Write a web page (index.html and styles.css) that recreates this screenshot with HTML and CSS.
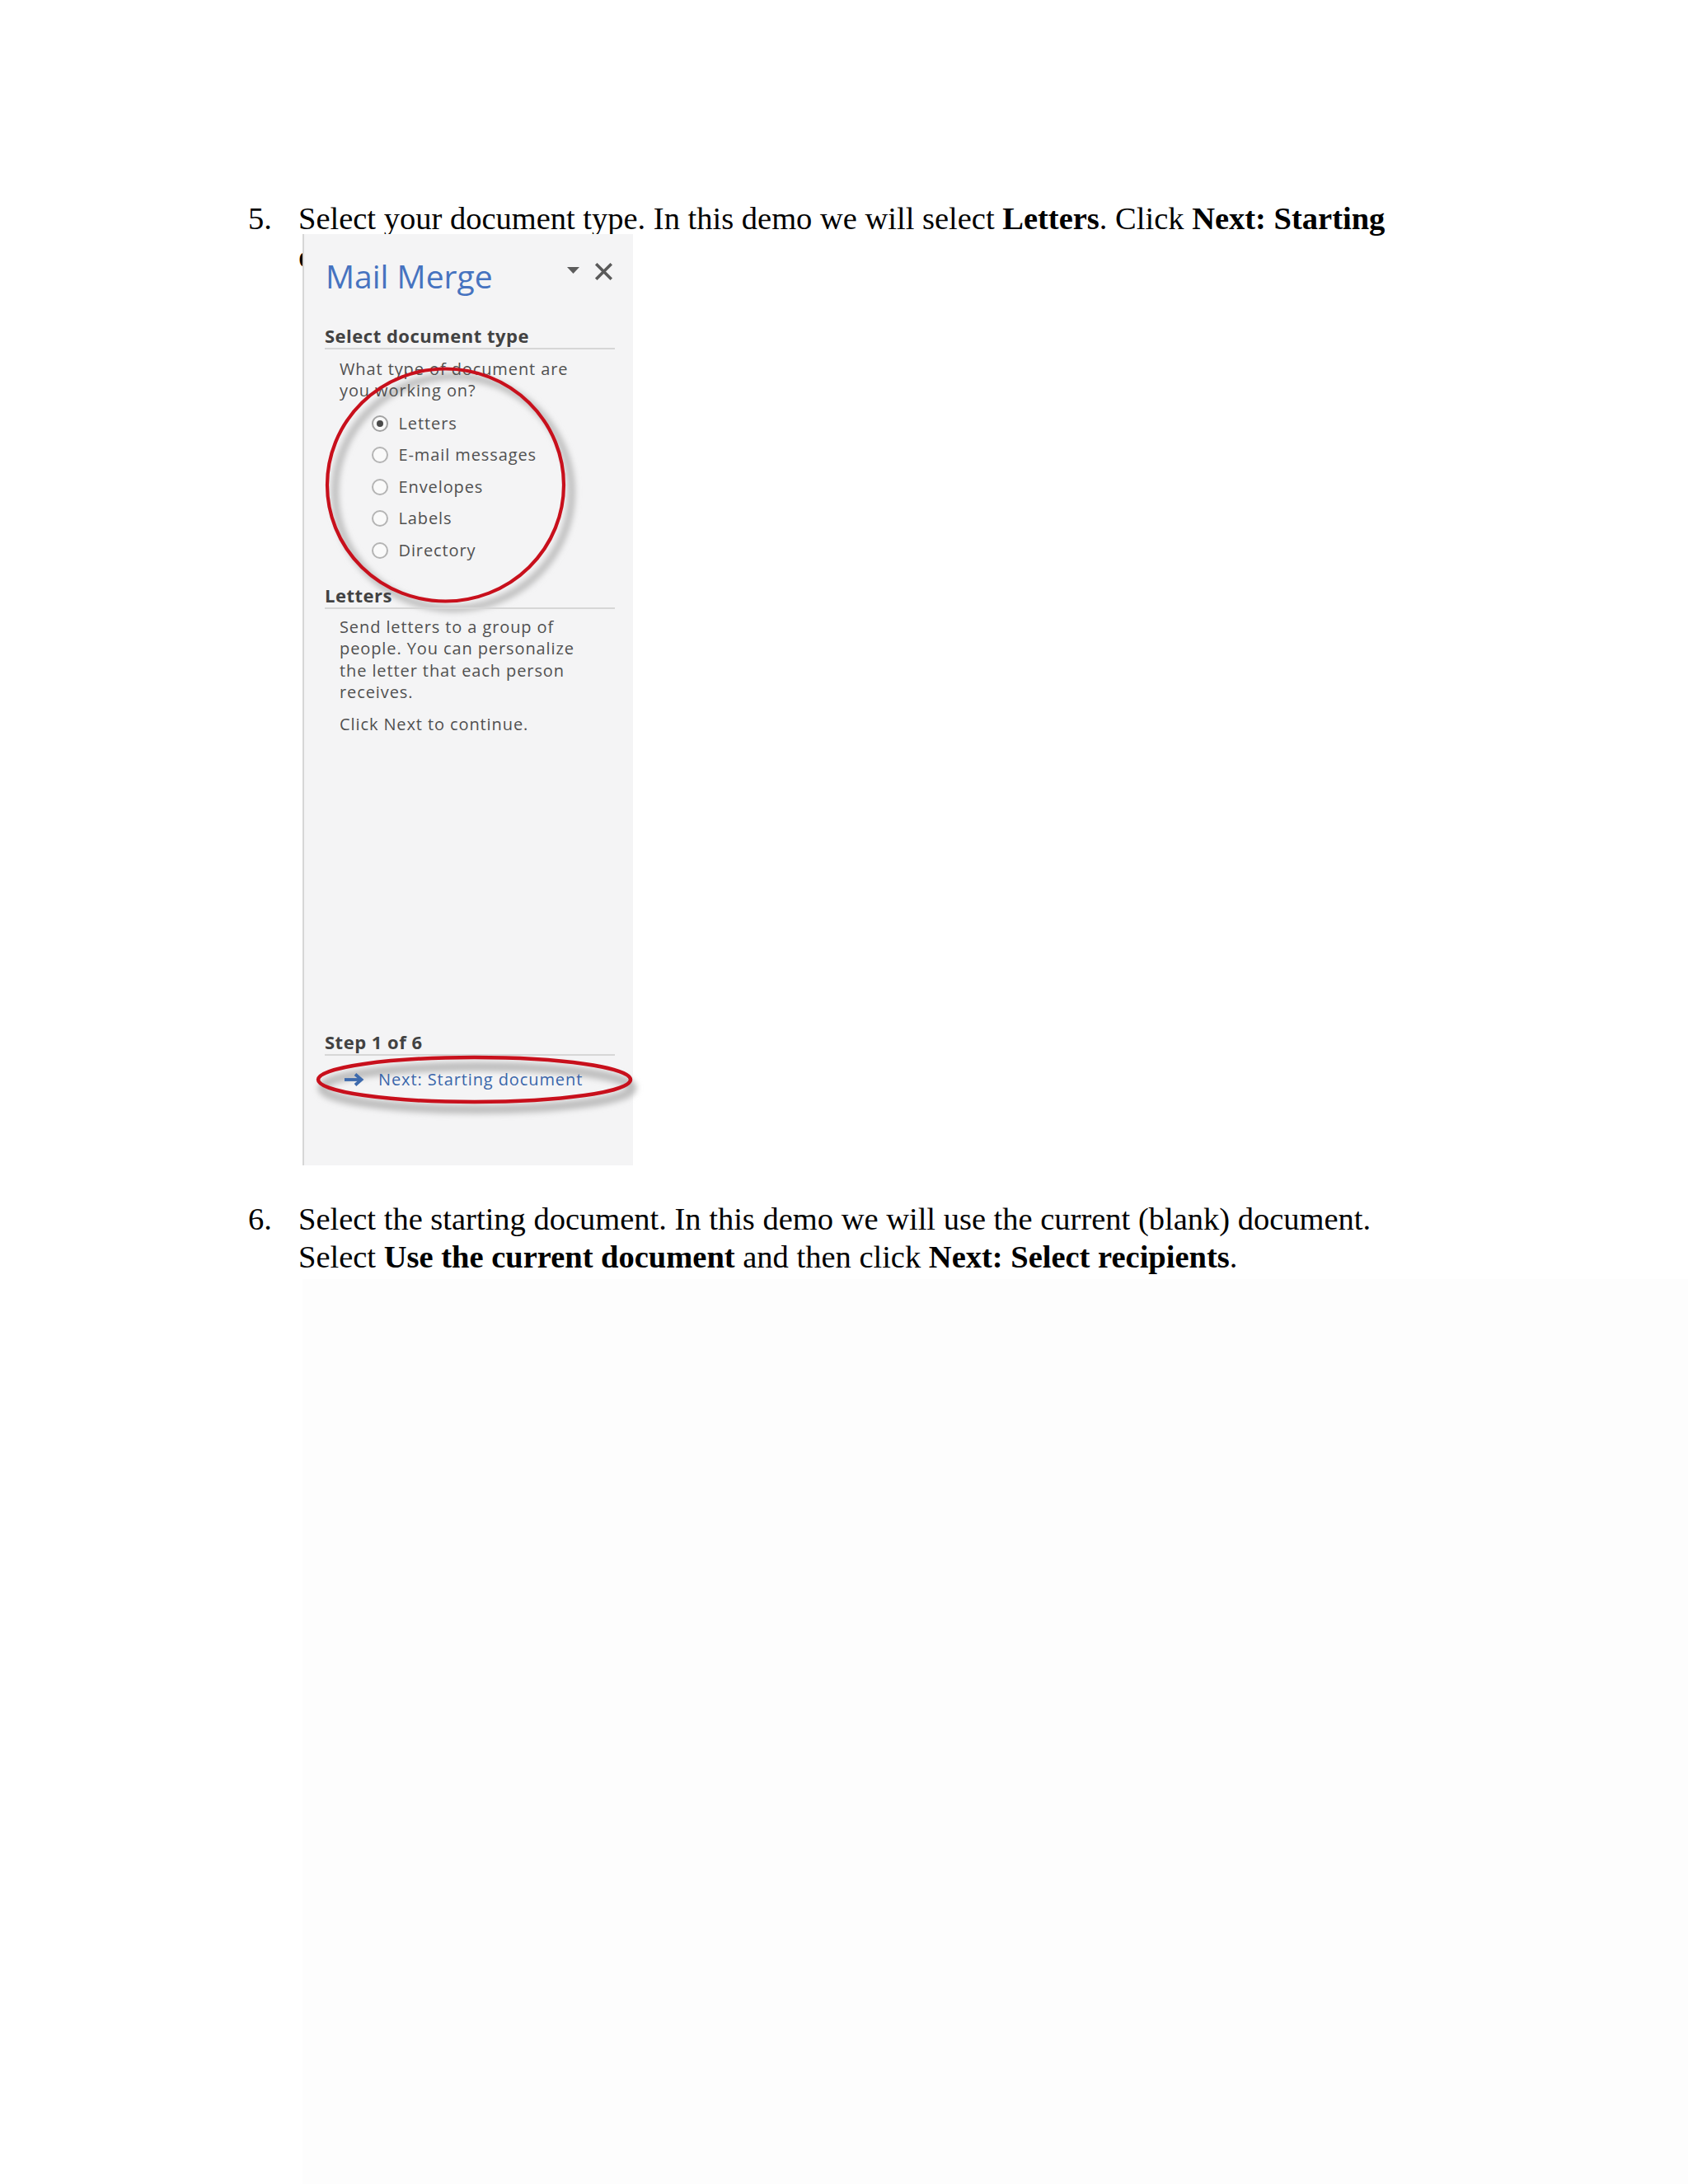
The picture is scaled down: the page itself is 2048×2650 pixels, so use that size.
FILE: index.html
```html
<!DOCTYPE html>
<html lang="en">
<head>
<meta charset="utf-8">
<title>Mail Merge - step 5</title>
<link rel="stylesheet" href="styles.css">
</head>
<body>
<div class="page">
  <div class="item">
    <span class="num">5.</span>
    <p class="text">Select your document type. In this demo we will select <b>Letters</b>. Click <b>Next: Starting</b><br><b>document</b>.</p>
  </div>

  <div class="pane">
    <svg class="shadows" width="420" height="1140" viewBox="0 0 420 1140">
      <defs>
        <filter id="soft" x="-20%" y="-60%" width="140%" height="220%">
          <feGaussianBlur stdDeviation="3.5"/>
        </filter>
      </defs>
      <ellipse cx="183" cy="313.5" rx="143.5" ry="141" fill="none" stroke="#bfbfbf" stroke-width="9" filter="url(#soft)"/>
      <ellipse cx="212" cy="1036" rx="188" ry="26" fill="none" stroke="#bdbdbd" stroke-width="11" filter="url(#soft)"/>
    </svg>

    <div class="pane-head">
      <span class="pane-title">Mail Merge</span>
      <svg class="pane-icons" width="55" height="21" viewBox="0 0 55 21">
        <polygon points="0,5 15,5 7.5,13" fill="#5c5c5c"/>
        <path d="M36.5 2.5 L52.5 18.5 M52.5 2.5 L36.5 18.5" stroke="#5a5a5a" stroke-width="3.6" stroke-linecap="square"/>
      </svg>
    </div>

    <div class="sec-title first">Select document type</div>
    <p class="desc first">What type of document are<br>you working on?</p>

    <ul class="radios">
      <li class="radio checked"><span class="dot"></span>Letters</li>
      <li class="radio"><span class="dot"></span>E-mail messages</li>
      <li class="radio"><span class="dot"></span>Envelopes</li>
      <li class="radio"><span class="dot"></span>Labels</li>
      <li class="radio"><span class="dot"></span>Directory</li>
    </ul>

    <div class="sec-title letters">Letters</div>
    <p class="desc second">Send letters to a group of<br>people. You can personalize<br>the letter that each person<br>receives.</p>
    <p class="desc third">Click Next to continue.</p>

    <div class="pane-foot">
      <div class="sec-title">Step 1 of 6</div>
      <div class="next-link">
        <svg class="arrow" width="25" height="16" viewBox="0 0 25 16">
          <path d="M1 8 H21" stroke="#3d6aad" stroke-width="3.8"/>
          <path d="M14 1.5 L21.5 8 L14 14.5" stroke="#3d6aad" stroke-width="3.8" fill="none"/>
        </svg>
        <span>Next: Starting document</span>
      </div>
    </div>

    <svg class="marks" width="420" height="1140" viewBox="0 0 420 1140">
      <ellipse cx="173.5" cy="304.5" rx="143.5" ry="141" fill="none" stroke="#c8101c" stroke-width="4.2"/>
      <ellipse cx="208.5" cy="1026" rx="189.5" ry="27" fill="none" stroke="#c8101c" stroke-width="4.5"/>
    </svg>
  </div>

  <div class="item second-item">
    <span class="num">6.</span>
    <p class="text">Select the starting document. In this demo we will use the current (blank) document.<br>Select <b>Use the current document</b> and then click <b>Next: Select recipients</b>.</p>
  </div>

  <div class="blank"></div>
</div>
</body>
</html>
```

FILE: styles.css
```css
html, body {
  margin: 0;
  padding: 0;
  background: #ffffff;
}

.page {
  width: 2048px;
  height: 2650px;
  box-sizing: border-box;
  padding-top: 241.5px;
  display: flex;
  flex-direction: column;
  overflow: hidden;
  font-family: "Liberation Serif", "Times New Roman", serif;
  font-size: 38.5px;
  line-height: 46px;
  color: #000000;
}

.item {
  display: grid;
  grid-template-columns: 61px 1fr;
  padding-left: 301px;
}

.item .text {
  margin: 0;
}

.item b {
  font-weight: 700;
}

.second-item {
  margin-top: 42.5px;
}

/* ---------- Mail Merge pane ---------- */
.pane {
  position: relative;
  z-index: 1;
  margin: -50px 0 0 367px;
  width: 401px;
  height: 1130px;
  flex: none;
  box-sizing: border-box;
  background: #f4f4f5;
  border-left: 2px solid #d6d6d6;
  padding: 27px 22px 91px 25px;
  display: flex;
  flex-direction: column;
  font-family: "Open Sans", "Noto Sans", sans-serif;
}

.shadows {
  position: absolute;
  left: -2px;
  top: 0;
  z-index: -1;
  overflow: visible;
  pointer-events: none;
}

.marks {
  position: absolute;
  left: -2px;
  top: 0;
  overflow: visible;
  pointer-events: none;
}

.pane-head {
  display: flex;
  justify-content: space-between;
  align-items: flex-start;
  height: 48px;
  padding-right: 3px;
}

.pane-title {
  margin-left: 1px;
  font-size: 39px;
  font-weight: 400;
  line-height: 48px;
  color: #4673c0;
}

.pane-icons {
  margin-top: 8px;
  display: block;
}

.sec-title {
  font-size: 22px;
  font-weight: 700;
  line-height: 26px;
  color: #424242;
  letter-spacing: 0.5px;
  padding-bottom: 1.5px;
  border-bottom: 2px solid #d6d6d6;
}

.sec-title.first {
  margin-top: 35.5px;
}

.sec-title.letters {
  margin-top: 22.25px;
}

.desc {
  margin: 0;
  padding-left: 18px;
  font-size: 20px;
  font-weight: 500;
  line-height: 26.5px;
  color: #505050;
  letter-spacing: 0.9px;
}

.desc.first {
  margin-top: 11px;
}

.desc.second {
  margin-top: 9px;
}

.desc.third {
  margin-top: 12px;
}

.radios {
  list-style: none;
  margin: 6.75px 0 0 0;
  padding: 0 0 0 57px;
}

.radio {
  height: 38.5px;
  display: flex;
  align-items: center;
  gap: 12.5px;
  font-size: 20px;
  font-weight: 500;
  line-height: 26px;
  color: #505050;
  letter-spacing: 0.9px;
}

.dot {
  width: 20px;
  height: 20px;
  box-sizing: border-box;
  border: 2px solid #b4b4b4;
  border-radius: 50%;
  background: #fafafa;
  display: flex;
  align-items: center;
  justify-content: center;
  flex: none;
}

.radio.checked .dot {
  border-color: #a2a2a2;
}

.radio.checked .dot::after {
  content: "";
  width: 8px;
  height: 8px;
  border-radius: 50%;
  background: #4a4a4a;
}

.pane-foot {
  margin-top: auto;
}

.next-link {
  display: flex;
  align-items: center;
  gap: 17px;
  margin-top: 16px;
  padding-left: 23px;
  font-size: 20px;
  font-weight: 500;
  line-height: 26px;
  color: #3a66aa;
  letter-spacing: 0.9px;
}

.arrow {
  display: block;
  flex: none;
}

/* ---------- faint blank picture below ---------- */
.blank {
  flex: 1;
  margin: 4px 0 0 367px;
  background: #fdfdfd;
}
```
